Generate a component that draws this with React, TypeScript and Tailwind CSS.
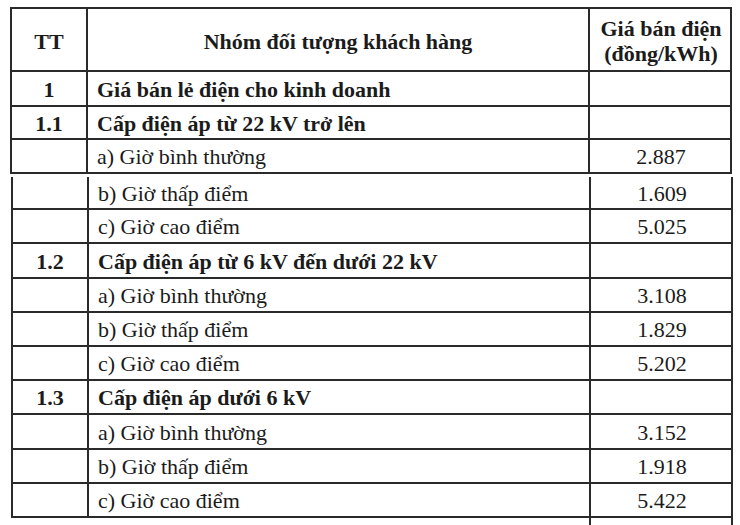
const font = { fontFamily: '"Liberation Serif", "Times New Roman", serif' };

type Row = { tt?: string; label: string; price?: string; bold?: boolean; h: number };

const upper: Row[] = [
  { tt: '1', label: 'Giá bán lẻ điện cho kinh doanh', bold: true, h: 35 },
  { tt: '1.1', label: 'Cấp điện áp từ 22 kV trở lên', bold: true, h: 33 },
  { label: 'a) Giờ bình thường', price: '2.887', h: 34 },
];

const lower: Row[] = [
  { label: 'b) Giờ thấp điểm', price: '1.609', h: 33 },
  { label: 'c) Giờ cao điểm', price: '5.025', h: 34 },
  { tt: '1.2', label: 'Cấp điện áp từ 6 kV đến dưới 22 kV', bold: true, h: 35 },
  { label: 'a) Giờ bình thường', price: '3.108', h: 34 },
  { label: 'b) Giờ thấp điểm', price: '1.829', h: 34 },
  { label: 'c) Giờ cao điểm', price: '5.202', h: 34 },
  { tt: '1.3', label: 'Cấp điện áp dưới 6 kV', bold: true, h: 34 },
  { label: 'a) Giờ bình thường', price: '3.152', h: 35 },
  { label: 'b) Giờ thấp điểm', price: '1.918', h: 34 },
  { label: 'c) Giờ cao điểm', price: '5.422', h: 34 },
];

function TableRow({ row }: { row: Row }) {
  return (
    <div className="flex border-b-2 border-[#2a2a2a]" style={{ height: row.h }}>
      <div className="w-[76px] shrink-0 border-r-2 border-[#2a2a2a] flex items-center justify-center pt-[2px] font-bold">
        {row.tt}
      </div>
      <div
        className={
          'w-[502px] shrink-0 border-r-2 border-[#2a2a2a] flex items-center pl-[9px] pt-[2px] ' +
          (row.bold ? 'font-bold' : '')
        }
      >
        {row.label}
      </div>
      <div className="flex-1 flex items-center justify-center pt-[2px] pl-[2px]">{row.price}</div>
    </div>
  );
}

export default function App() {
  return (
    <div className="w-[740px] h-[525px] bg-white overflow-hidden text-[#1b1b1b] text-[22px] leading-none" style={font}>
      {/* upper block */}
      <div className="ml-[10px] mt-[7px] w-[722px] border-x-2 border-t-2 border-[#2a2a2a]">
        <div className="flex border-b-2 border-[#2a2a2a] h-[63px] font-bold">
          <div className="w-[76px] shrink-0 border-r-2 border-[#2a2a2a] flex items-center justify-center pt-[4px]">
            TT
          </div>
          <div className="w-[502px] shrink-0 border-r-2 border-[#2a2a2a] flex items-center justify-center pt-[4px]">
            Nhóm đối tượng khách hàng
          </div>
          <div className="flex-1 flex flex-col items-center justify-center leading-[25px] pt-[2px] pl-[2px]">
            <span>Giá bán điện</span>
            <span>(đồng/kWh)</span>
          </div>
        </div>
        {upper.map((r, i) => (
          <TableRow key={i} row={r} />
        ))}
      </div>

      {/* lower block, scan offset */}
      <div className="ml-[11px] mt-[3px] w-[722px]">
        <div className="border-x-2 border-[#2a2a2a]">
          {lower.map((r, i) => (
            <TableRow key={i} row={r} />
          ))}
        </div>
        <div className="flex h-[12px]">
          <div className="w-[78px] shrink-0" />
          <div className="w-[502px] shrink-0 border-r-2 border-[#2a2a2a]" />
          <div className="flex-1 border-r-2 border-[#2a2a2a]" />
        </div>
      </div>
    </div>
  );
}
